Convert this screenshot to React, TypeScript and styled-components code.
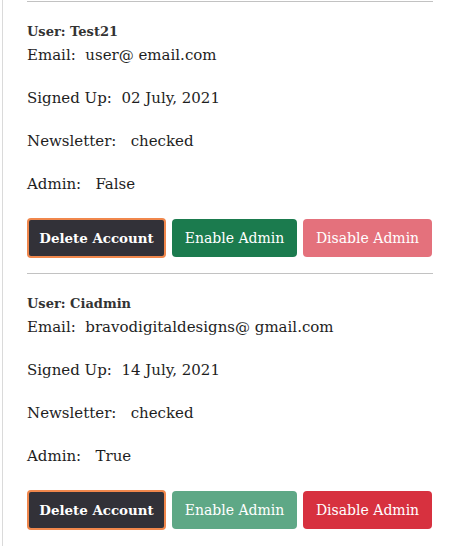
import React from "react";
import styled, { createGlobalStyle } from "styled-components";

const Global = createGlobalStyle`
  html, body { margin: 0; padding: 0; background: #fff; }
  body { font-family: "DejaVu Serif", "Liberation Serif", serif; color: #212529; }
`;

const Page = styled.div`
  margin-left: 2px;
  border-left: 1px solid #dadada;
  padding-left: 24px;
  width: 406px;
  min-height: 546px;
`;

const Rule = styled.hr`
  margin: 1px 0 0;
  border: 0;
  border-top: 1px solid #c2c2c2;
  height: 0;
`;

const UserCard = styled.section`
  display: flex;
  flex-direction: column;
  padding-bottom: 14px;
`;

const Title = styled.h6`
  margin: 20px 0 0;
  font-size: 13px;
  line-height: 20px;
  font-weight: 700;
  color: #333;
`;

const Field = styled.p`
  margin: 0 0 16px;
  font-size: 15px;
  line-height: 27px;
  white-space: pre;
  color: #1e1e1e;
`;

const Actions = styled.div`
  display: flex;
  align-items: center;
  gap: 6px;
  margin-top: 4px;
`;

type Tone = "dark" | "success" | "danger";

const colors: Record<Tone, { on: string; off: string }> = {
  dark: { on: "#323138", off: "#323138" },
  success: { on: "#1b7b4e", off: "#5ea886" },
  danger: { on: "#d7313f", off: "#e4717c" },
};

const Btn = styled.button<{ $tone: Tone; $off?: boolean; $w: number }>`
  box-sizing: border-box;
  width: ${(p) => p.$w}px;
  height: ${(p) => (p.$tone === "dark" ? 40 : 38)}px;
  border-radius: 4px;
  border: ${(p) => (p.$tone === "dark" ? "2px solid #f0874c" : "none")};
  background: ${(p) => (p.$off ? colors[p.$tone].off : colors[p.$tone].on)};
  color: #fff;
  font-family: "DejaVu Serif", "Liberation Serif", serif;
  font-size: ${(p) => (p.$tone === "dark" ? 13.4 : 14)}px;
  font-weight: ${(p) => (p.$tone === "dark" ? 700 : 400)};
  padding: 0;
  cursor: ${(p) => (p.$off ? "default" : "pointer")};
`;

type User = {
  name: string;
  email: string;
  signed: string;
  admin: boolean;
};

const users: User[] = [
  { name: "Test21", email: "user@ email.com", signed: "02 July, 2021", admin: false },
  { name: "Ciadmin", email: "bravodigitaldesigns@ gmail.com", signed: "14 July, 2021", admin: true },
];

export default function App() {
  return (
    <>
      <Global />
      <Page>
        {users.map((u) => (
          <UserCard key={u.name}>
            <Rule />
            <Title>User: {u.name}</Title>
            <Field>{`Email:  ${u.email}`}</Field>
            <Field>{`Signed Up:  ${u.signed}`}</Field>
            <Field>{`Newsletter:   checked`}</Field>
            <Field>{`Admin:   ${u.admin ? "True" : "False"}`}</Field>
            <Actions>
              <Btn $tone="dark" $w={139}>Delete Account</Btn>
              <Btn $tone="success" $w={125} $off={u.admin} disabled={u.admin}>Enable Admin</Btn>
              <Btn $tone="danger" $w={129} $off={!u.admin} disabled={!u.admin}>Disable Admin</Btn>
            </Actions>
          </UserCard>
        ))}
      </Page>
    </>
  );
}
